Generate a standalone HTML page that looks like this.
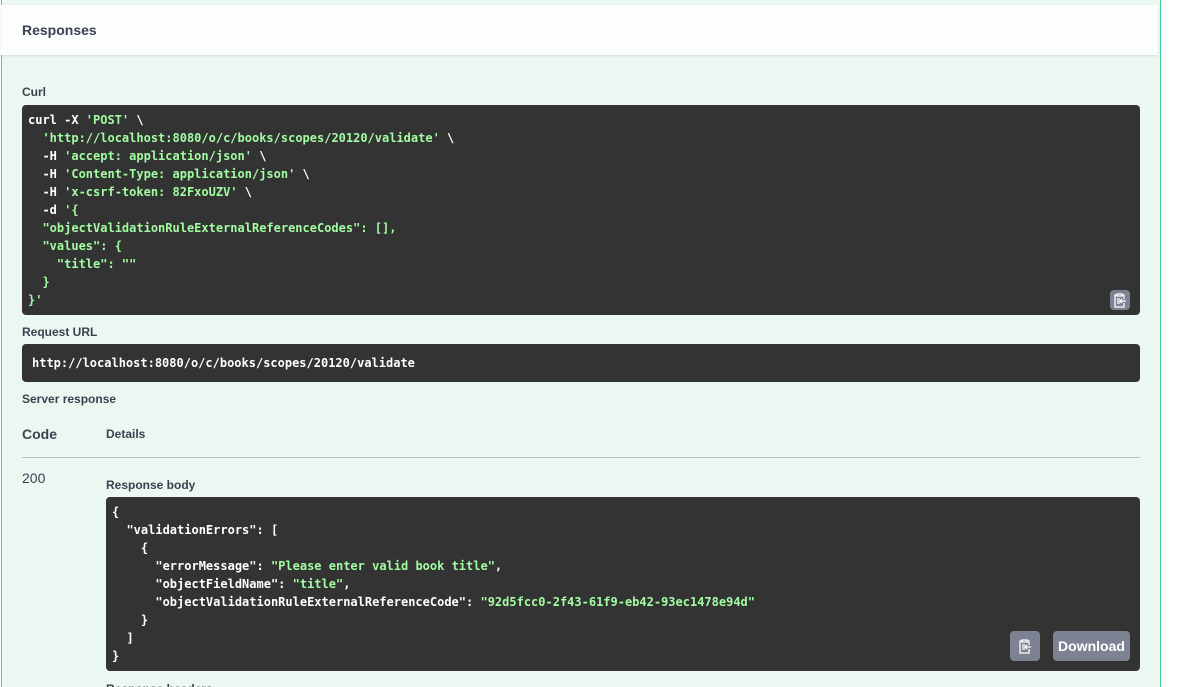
<!DOCTYPE html>
<html><head><meta charset="utf-8"><style>
*{margin:0;padding:0;box-sizing:border-box}
html,body{width:1185px;height:687px;overflow:hidden}
body{background:#fff;font-family:"Liberation Sans",sans-serif;position:relative}
.panel{position:absolute;left:1px;top:0;width:1160px;height:687px;background:#ebf8f1;border-left:1px solid #49cc90;border-right:1px solid #49cc90}
.hdr{position:absolute;left:1px;top:5px;width:1157px;height:50px;background:#fcfefd;box-shadow:0 1px 2px rgba(0,0,0,.1)}
.t{position:absolute;color:#3b4151;font-weight:bold;font-size:12px}
.code{position:absolute;background:#333;border-radius:4px;color:#fff;font-family:"DejaVu Sans Mono",monospace;font-weight:bold;font-size:12px;line-height:18px;white-space:pre;padding:6px 6px}
.g{color:#a2fca2}
.btn{position:absolute;background:#7d8293;border-radius:4px}
</style></head><body>
<div class="panel"></div>
<div class="hdr"></div>
<div class="t" style="left:22px;top:22px;font-size:14px">Responses</div>
<div class="t" style="left:22px;top:85px">Curl</div>
<div class="code" style="left:22px;top:105px;width:1118px;height:210px">curl -X <span class="g">'POST'</span> \
  <span class="g">'http://localhost:8080/o/c/books/scopes/20120/validate'</span> \
  -H <span class="g">'accept: application/json'</span> \
  -H <span class="g">'Content-Type: application/json'</span> \
  -H <span class="g">'x-csrf-token: 82FxoUZV'</span> \
  -d <span class="g">'{
  "objectValidationRuleExternalReferenceCodes": [],
  "values": {
    "title": ""
  }
}'</span></div>
<div class="btn" style="left:1110px;top:290px;width:20px;height:20px"></div>
<svg style="position:absolute;left:1113px;top:292px" width="14" height="16" viewBox="0 0 14 16" fill="none" stroke="#fff" stroke-width="1.3"><path d="M4 3H2v12h9v-4M9 3h2v4M4 2h5v2H4z M4 7h3M4 9h2M4 11h3M6 9h7M9 7l-2 2 2 2"/></svg>
<div class="t" style="left:22px;top:325px">Request URL</div>
<div class="code" style="left:22px;top:344px;width:1118px;height:38px;padding:10px 10px">http://localhost:8080/o/c/books/scopes/20120/validate</div>
<div class="t" style="left:22px;top:392px">Server response</div>
<div class="t" style="left:22px;top:426px;font-size:14px">Code</div>
<div class="t" style="left:106px;top:427px">Details</div>
<div style="position:absolute;left:22px;top:457px;width:1118px;height:1px;background:rgba(59,65,81,.3)"></div>
<div style="position:absolute;left:22px;top:470px;font-size:14px;color:#3b4151">200</div>
<div class="t" style="left:106px;top:478px">Response body</div>
<div class="code" style="left:106px;top:497px;width:1034px;height:174px">{
  "validationErrors": [
    {
      "errorMessage": <span class="g">"Please enter valid book title"</span>,
      "objectFieldName": <span class="g">"title"</span>,
      "objectValidationRuleExternalReferenceCode": <span class="g">"92d5fcc0-2f43-61f9-eb42-93ec1478e94d"</span>
    }
  ]
}</div>
<div class="btn" style="left:1010px;top:631px;width:30px;height:30px"></div>
<svg style="position:absolute;left:1018px;top:638px" width="14" height="16" viewBox="0 0 14 16" fill="none" stroke="#fff" stroke-width="1.3"><path d="M4 3H2v12h9v-4M9 3h2v4M4 2h5v2H4z M4 7h3M4 9h2M4 11h3M6 9h7M9 7l-2 2 2 2"/></svg>
<div class="btn" style="left:1053px;top:631px;width:77px;height:30px;color:#fff;font-weight:bold;font-size:14px;line-height:30px;text-align:center">Download</div>
<div class="t" style="left:106px;top:682px">Response headers</div>
</body></html>
